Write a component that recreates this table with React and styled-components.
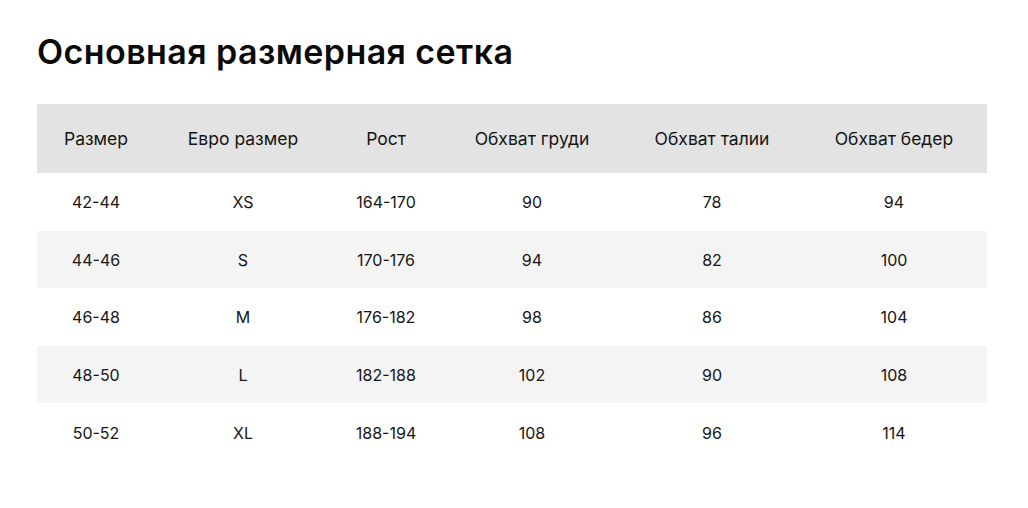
import styled, { createGlobalStyle } from "styled-components"

const Global = createGlobalStyle`
  body {
    margin: 0;
    background: #fff;
    font-family: Inter, "Noto Sans", sans-serif;
    color: #111;
  }
`

const Page = styled.div`
  padding: 32px 41px 0 37px;
`

const Title = styled.h1`
  margin: 0 0 32px;
  font-size: 34px;
  font-weight: 600;
  line-height: 40px;
  letter-spacing: 0.42px;
  color: #0a0a0a;
`

const Table = styled.div`
  width: 950px;
  display: grid;
  grid-template-columns: 118px 176px 110px 182px 178px 186px;
`

const Row = styled.div`
  display: contents;
`

const Cell = styled.div`
  height: ${p => (p.head ? "69px" : "57.6px")};
  display: flex;
  align-items: center;
  justify-content: center;
  padding-top: ${p => (p.head ? "0" : "1px")};
  box-sizing: border-box;
  font-size: ${p => (p.head ? "17.5px" : "16px")};
  background: ${p => (p.head ? "#e3e3e3" : p.shade ? "#f4f4f4" : "#fff")};
  color: #151515;
`

const heads = ["Размер", "Евро размер", "Рост", "Обхват груди", "Обхват талии", "Обхват бедер"]

const rows = [
  ["42-44", "XS", "164-170", "90", "78", "94"],
  ["44-46", "S", "170-176", "94", "82", "100"],
  ["46-48", "M", "176-182", "98", "86", "104"],
  ["48-50", "L", "182-188", "102", "90", "108"],
  ["50-52", "XL", "188-194", "108", "96", "114"],
]

export default function App() {
  return (
    <Page>
      <Global />
      <Title>Основная размерная сетка</Title>
      <Table>
        <Row>
          {heads.map(h => (
            <Cell head key={h}>{h}</Cell>
          ))}
        </Row>
        {rows.map((r, i) => (
          <Row key={i}>
            {r.map((v, j) => (
              <Cell shade={i % 2 === 1} key={j}>{v}</Cell>
            ))}
          </Row>
        ))}
      </Table>
    </Page>
  )
}
